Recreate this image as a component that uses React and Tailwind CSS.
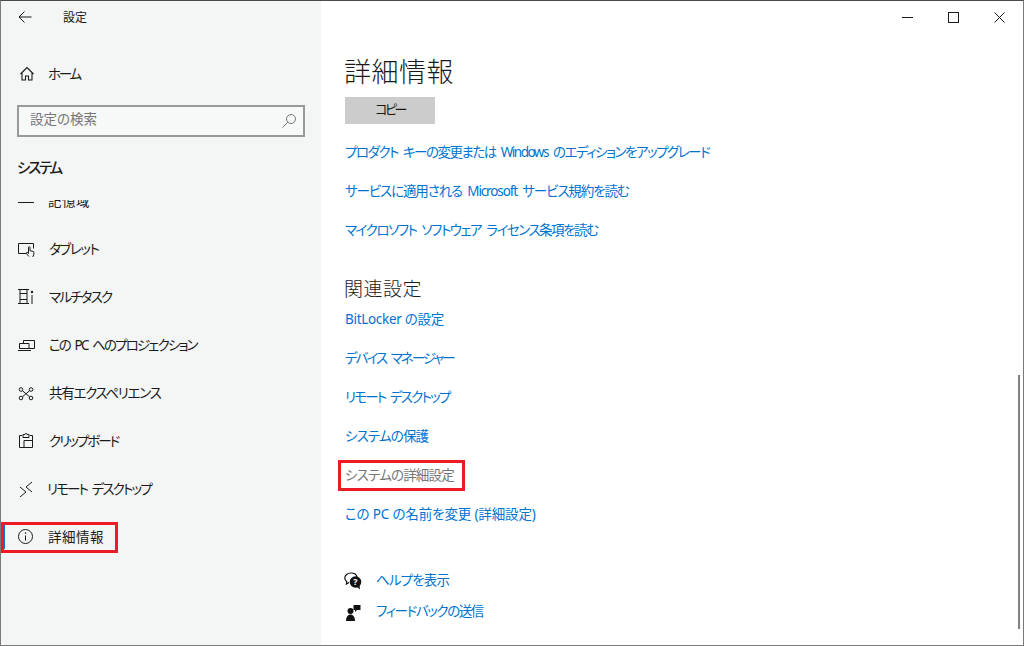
const font = "font-['Noto_Sans','Noto_Sans_CJK_JP',sans-serif] [font-feature-settings:'palt']";

const Svg = ({ children, className = '', size = 18 }) => (
    <svg width={size} height={size} viewBox="0 0 18 18" fill="none" stroke="#1a1a1a" strokeWidth="1" className={className}>
        {children}
    </svg>
);

const StorageIcon = () => <Svg><path d="M0 10.500h16" strokeWidth="1" /></Svg>;
const TabletIcon = () => (
    <Svg>
        <path d="M8 13.500H.5v-10h15v5" />
        <path d="M11 16.500c-1.200-1-2-2-2.600-3.400-.3-.8.6-1.200 1.200-.5l.9 1V7.400c0-1 1.500-1 1.500 0v3.400l3 .5c.8.2 1 .7 1 1.400 0 1.500-.5 3-1.200 4.300" />
    </Svg>
);
const MultitaskIcon = () => (
    <Svg>
        <path d="M0 1.500h11M0 15.500h11M2 1.500v14M9 1.500v14M2 5.500h7M2 11.500h7" />
        <circle cx="14" cy="4" r="1.200" fill="#1a1a1a" stroke="none" />
        <path d="M14 7v9" />
    </Svg>
);
const ProjectIcon = () => (
    <Svg>
        <path d="M5.500 7V4.500h11v8h-5.500" />
        <path d="M1.500 7.500h9.500v5H1.500zM0 14.500h13" />
    </Svg>
);
const ConnectIcon = () => (
    <Svg>
        <circle cx="3" cy="5.500" r="1.800" /><circle cx="13" cy="5.500" r="1.800" />
        <circle cx="3" cy="14" r="1.800" /><circle cx="13" cy="14" r="1.800" />
        <path d="M4.400 6.700l7.200 6.100M11.600 6.700l-7.200 6.100" />
    </Svg>
);
const ClipboardIcon = () => (
    <Svg>
        <path d="M4 3.500H1.500v12h13v-12H12M5 5.500V2.500h2c0-1.500 2-1.500 2 0h2v3zM6 15.500V8.500h8" />
    </Svg>
);
const RemoteIcon = () => (
    <Svg>
        <path d="M2 7l6 5-6 5M14 2L8 7l6 5" />
    </Svg>
);
const InfoIcon = () => (
    <Svg>
        <circle cx="7.500" cy="8.500" r="7" />
        <path d="M7.500 7.500v5" />
        <circle cx="7.500" cy="5" r=".8" fill="#1a1a1a" stroke="none" />
    </Svg>
);

const navItems = [
    { icon: StorageIcon, label: '記憶域', cls: 'ml-[12px] tracking-[0.5px]' },
    { icon: TabletIcon, label: 'タブレット', cls: 'ml-[13px] tracking-[-1.4px]' },
    { icon: MultitaskIcon, label: 'マルチタスク', cls: 'ml-[13px] tracking-[-1.8px]' },
    { icon: ProjectIcon, label: 'この PC へのプロジェクション', cls: 'ml-[13px] tracking-[-1.87px] [word-spacing:3px]' },
    { icon: ConnectIcon, label: '共有エクスペリエンス', cls: 'ml-[13px] tracking-[-1.3px]' },
    { icon: ClipboardIcon, label: 'クリップボード', cls: 'ml-[13px] tracking-[-2px]' },
    { icon: RemoteIcon, label: 'リモート デスクトップ', cls: 'ml-[11px] tracking-[-1.87px] [word-spacing:3px]' },
    { icon: InfoIcon, label: '詳細情報', cls: 'ml-[12px] tracking-[0.5px]', active: true },
];

const NavItem = ({ icon: Icon, label, cls, active }) => (
    <div className="relative flex h-12 items-center pl-[17px]">
        {active && <span className="absolute left-[3px] top-3 h-6 w-px bg-[#0078d7]" />}
        <Icon />
        <span className={`text-[13.5px] text-[#1a1a1a] ${cls}`}>{label}</span>
    </div>
);

const LinkRow = ({ children, cls = '' }) => (
    <div className={`flex h-[39px] items-center whitespace-pre text-[13.5px] ${cls}`}>{children}</div>
);

const App = () => (
    <div className={`relative flex h-[646px] w-[1024px] overflow-hidden border border-[#7a7a7a] border-t-[#4a4a4a] bg-white ${font}`}>
        {/* Sidebar */}
        <aside className="flex w-[320px] shrink-0 flex-col bg-[#f4f5f5]">
            <div className="flex h-8 items-center pl-[17px]">
                <svg width="14" height="14" viewBox="0 0 14 14" fill="none" stroke="#1a1a1a" strokeWidth="1">
                    <path d="M13.500 7H1M6.500 1.500L1 7l5.500 5.500" />
                </svg>
                <span className="ml-[31px] mt-[2px] text-[12px] text-[#1a1a1a]">設定</span>
            </div>
            <div className="mt-[17px] flex h-12 items-center pl-[18px]">
                <svg width="16" height="16" viewBox="0 0 16 16" fill="none" stroke="#1a1a1a" strokeWidth="1.100">
                    <path d="M1.500 8l6.500-6.500L14.500 8M3 6.500v7.500h3.500v-4h3v4H13V6.500" />
                </svg>
                <span className="ml-[13px] text-[13.5px] tracking-[-2.300px] text-[#1a1a1a]">ホーム</span>
            </div>
            <div className="mx-[16px] mt-[7px] flex h-8 w-[288px] items-center justify-between border-2 border-[#999999] bg-[#f7f8f8] pl-[11px] pr-[6px]">
                <span className="-mt-[3px] text-[13.5px] text-[#767676]">設定の検索</span>
                <svg width="16" height="16" viewBox="0 0 16 16" fill="none" stroke="#777777" strokeWidth="1">
                    <circle cx="10" cy="6" r="4.500" />
                    <path d="M6.800 9.200L1.500 14.500" />
                </svg>
            </div>
            <div className="mt-[18px] pl-[16px] text-[14.5px] font-medium leading-[24px] tracking-[-2.200px] text-[#1a1a1a]">システム</div>
            <div className="mt-[21px] min-h-0 flex-1 overflow-hidden">
                <div className="-mt-[23px]">
                    {navItems.map((item) => (
                        <NavItem key={item.label} {...item} />
                    ))}
                </div>
            </div>
        </aside>

        {/* Main */}
        <main className="relative flex min-w-0 flex-1 flex-col pl-[24px] text-[#0073cf]">
            <h1 className="mt-[51px] -ml-px h-[40px] text-[27px] font-light leading-[40px] tracking-[0.500px] text-[#1a1a1a]">詳細情報</h1>
            <div className="mt-[5px] flex h-[27px] w-[90px] items-center justify-center bg-[#cccccc] pb-[2px] text-[13px] tracking-[-2.600px] text-[#1a1a1a]">コピー</div>
            <div className="mt-[9px]">
                <LinkRow cls="tracking-[-1.500px] [word-spacing:3px]">プロダクト キーの変更または Windows のエディションをアップグレード</LinkRow>
                <LinkRow cls="tracking-[-1.130px] [word-spacing:3px]">サービスに適用される Microsoft サービス規約を読む</LinkRow>
                <LinkRow cls="tracking-[-1.480px] [word-spacing:3px]">マイクロソフト ソフトウェア ライセンス条項を読む</LinkRow>
            </div>
            <h2 className="mt-[24px] -ml-px h-[26px] text-[19px] font-light leading-[30px] tracking-[0.500px] text-[#1a1a1a]">関連設定</h2>
            <div>
                <LinkRow cls="tracking-[-0.300px]">BitLocker の設定</LinkRow>
                <LinkRow cls="tracking-[-1.970px] [word-spacing:3px]">デバイス マネージャー</LinkRow>
                <LinkRow cls="tracking-[-1.820px] [word-spacing:3px]">リモート デスクトップ</LinkRow>
                <LinkRow cls="tracking-[-0.850px]">システムの保護</LinkRow>
                <LinkRow cls="tracking-[-0.800px] text-[#767676]">システムの詳細設定</LinkRow>
                <LinkRow cls="tracking-[-0.150px]">この PC の名前を変更 (詳細設定)</LinkRow>
            </div>
            <div className="mt-[31px] flex h-[31px] items-center text-[13.5px]">
                <svg width="18" height="18" viewBox="0 0 18 18" className="mr-[14px] -ml-px">
                    <path d="M7 1C3.400 1 .8 3.200.8 6c0 1.500.8 2.800 2 3.700L2.400 12l2.600-1.500" fill="none" stroke="#111" strokeWidth="1.200" />
                    <path d="M7 1c3 0 5.500 1.600 6 4" fill="none" stroke="#111" strokeWidth="1.200" />
                    <circle cx="11.500" cy="10" r="5.800" fill="#111" />
                    <path d="M13 15l3 2.500-.5-4z" fill="#111" />
                    <text x="11.500" y="13" fontSize="9" fontWeight="700" textAnchor="middle" fill="#fff">?</text>
                </svg>
                <span className="tracking-[-0.850px]">ヘルプを表示</span>
            </div>
            <div className="flex h-[31px] items-center text-[13.5px]">
                <svg width="18" height="18" viewBox="0 0 18 18" className="mr-[14px] -ml-px">
                    <circle cx="6.500" cy="8" r="3" fill="#111" />
                    <path d="M2 18c0-4 2-6.500 4.500-6.500S11 14 11 18z" fill="#111" />
                    <path d="M9.500 2h7v5h-3.500l-2 2V7H9.500z" fill="#111" />
                </svg>
                <span className="tracking-[-1.400px]">フィードバックの送信</span>
            </div>

            {/* Window controls */}
            <svg width="11" height="1" className="absolute left-[581px] top-[16px]"><path d="M0 .5h11" stroke="#1a1a1a" /></svg>
            <svg width="11" height="11" className="absolute left-[627px] top-[11px]"><rect x=".5" y=".5" width="10" height="10" fill="none" stroke="#1a1a1a" /></svg>
            <svg width="11" height="11" className="absolute left-[673px] top-[11px]"><path d="M.5.5l10 10M10.500.5l-10 10" stroke="#1a1a1a" /></svg>

            {/* Scrollbar */}
            <div className="absolute left-[697px] top-[374px] h-[254px] w-[2px] bg-[#808080]" />
        </main>

        {/* Red callouts */}
        <div className="absolute left-0 top-[521px] h-[31px] w-[117px] border-[3px] border-[#ed1c24]" />
        <div className="absolute left-[337px] top-[459px] h-[31px] w-[127px] border-[3px] border-[#ed1c24]" />
    </div>
);

export default App;
